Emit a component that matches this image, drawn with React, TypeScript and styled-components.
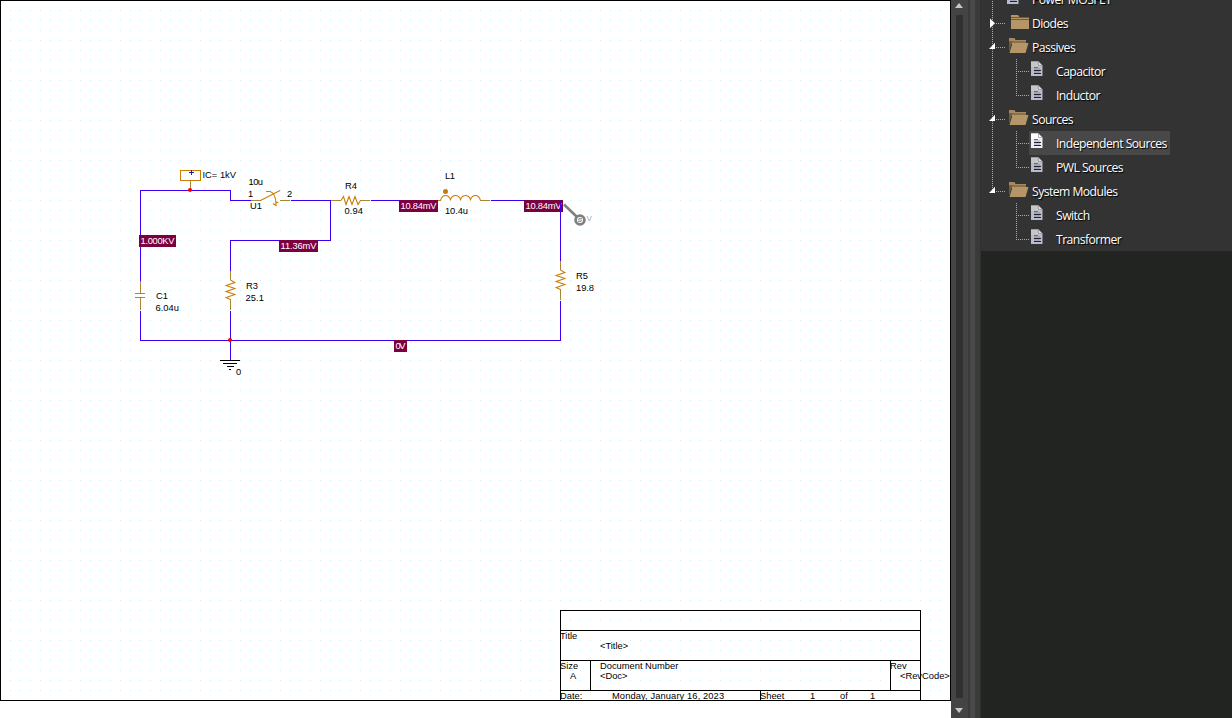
import React from 'react';
import styled, { createGlobalStyle, css } from 'styled-components';

const GlobalStyle = createGlobalStyle`
  body { margin: 0; background: #fff; overflow: hidden; }
  * { box-sizing: border-box; }
`;

const WIRE = '#3a00f5';
const PIN = '#ab8437';
const PART = '#c87d0a';
const PROBE_BG = '#7b0040';

const Window = styled.div`
  display: flex;
  width: 1232px;
  height: 718px;
  overflow: hidden;
  background: #fff;
`;

/* ---------- schematic page ---------- */

const Page = styled.main`
  display: grid;
  flex: none;
  width: 951px;
  height: 701px;
  background: #fff;
  border: 1px solid #000;
`;

const Drawing = styled.svg`
  grid-area: 1 / 1;
  display: block;
  margin: -1px;
  width: 951px;
  height: 701px;
  font-family: 'Liberation Sans', Arial, sans-serif;
  font-size: 9.33px;
`;

const TitleBlock = styled.section`
  grid-area: 1 / 1;
  place-self: end;
  position: relative;
  display: grid;
  grid-template-columns: 100%;
  grid-template-rows: 20px 30px 30px 9px;
  width: 361px;
  margin: 0 29px -1px 0;
  border: 1px solid #000;
  font: 9.33px/10px 'Liberation Sans', Arial, sans-serif;
  color: #000;
`;

const BlockRow = styled.div<{ $last?: boolean }>`
  display: flex;
  white-space: pre;
  border-bottom: ${(p) => (p.$last ? '0' : '1px solid #000')};
`;

const BlockCell = styled.div<{ $width?: number; $pad?: number }>`
  flex: ${(p) => (p.$width ? `0 0 ${p.$width}px` : '1 1 0')};
  min-width: 0;
  padding-left: ${(p) => p.$pad ?? 0}px;
  & + & { border-left: 1px solid #000; }
`;

const Line = styled.div<{ $indent?: number; $track?: number }>`
  margin-left: ${(p) => p.$indent ?? -1}px;
  letter-spacing: ${(p) => p.$track ?? 0}px;
`;

const InlineLine = styled.div`
  display: flex;
  margin-left: -1px;
`;

const Field = styled.span<{ $width: number; $track?: number }>`
  flex: 0 0 ${(p) => p.$width}px;
  letter-spacing: ${(p) => p.$track ?? 0}px;
`;

type LabelProps = { x: number; y: number; w: number; children: string; fill?: string };
const Label = ({ x, y, w, children, fill = '#000' }: LabelProps) => (
  <text x={x} y={y} textLength={w} fill={fill}>{children}</text>
);

type BadgeProps = { x: number; y: number; w: number; children: string };
const Badge = ({ x, y, w, children }: BadgeProps) => (
  <g>
    <rect x={x} y={y} width={w} height={12} fill={PROBE_BG} shapeRendering="crispEdges" />
    <Label x={x + 1.5} y={y + 9} w={w - 3} fill="#fff">{children}</Label>
  </g>
);

const Schematic = () => (
  <Drawing viewBox="0 0 951 701">
    <defs>
      <pattern id="dots" width="10" height="10" patternUnits="userSpaceOnUse">
        <rect width="1" height="1" fill="#c6ecff" />
      </pattern>
    </defs>
    <rect x="10" y="10" width="940" height="690" fill="url(#dots)" />

    <g fill="none" stroke={WIRE} shapeRendering="crispEdges">
      <path d="M140.5 281V190.5H230.5V200.5H251" />
      <path d="M140.5 311V340.5H560.5V301" />
      <path d="M291 200.5H330.5V240.5H230.5V271" />
      <path d="M230.5 311V360" />
      <path d="M371 200.5H400" />
      <path d="M491 200.5H561" />
    </g>

    <g fill="none" stroke={PIN} shapeRendering="crispEdges">
      <path d="M140.5 281V293M140.5 298V310" />
      <path d="M230.5 271V280M230.5 299V310" />
      <path d="M560.5 261V270M560.5 289V300" />
      <path d="M251 200.5H261M280 200.5H290" />
      <path d="M331 200.5H341M360 200.5H370" />
      <path d="M438 200.5H441M480 200.5H490" />
      <path d="M190.5 181V190" />
    </g>

    <g fill="none" stroke={PART} strokeWidth="1.1">
      <path d="M135 293.5H145M135 297.5H145" shapeRendering="crispEdges" />
      <rect x="180.5" y="170.5" width="20" height="10" shapeRendering="crispEdges" />
      <path d="M230.5 280L234.8 282.5L226.200 285.500L234.800 288.500L226.200 291.500L234.800 294.500L226.200 297.500L230.500 299.500" />
      <path d="M560.500 270L564.800 272.500L556.200 275.500L564.800 278.500L556.200 281.500L564.800 284.500L556.200 287.500L560.500 289.500" />
      <path d="M341 200.5L343.500 196.5L346 204.5L349 196.5L352 204.5L355 196.5L358 204.5L360.5 200.5" />
      <path d="M260.5 200.5L280 190.5" />
      <path d="M266 191.500H270Q276 193 276 205M273 203.500L276 205.500V202L278.500 202.500" />
      <path d="M440.5 200.5Q442 195.5 445.5 195.5T450.5 199.5Q452 195.5 455.5 195.5T460.5 199.5Q462 195.5 465.5 195.5T470.5 199.5Q472 195.5 475.5 195.5T480.5 200.5" />
    </g>
    <circle cx="445.5" cy="191.5" r="2.5" fill={PART} />
    <path d="M189 172.5H194M191.5 170V175" stroke="#1a1ad0" shapeRendering="crispEdges" />

    <path
      d="M220 360.5H240M223 363.5H237M227 366.5H234M229 369.5H231"
      stroke="#000"
      shapeRendering="crispEdges"
    />
    <circle cx="190" cy="190" r="2.1" fill="#f00" />
    <circle cx="230" cy="340" r="2.1" fill="#f00" />

    <Label x={202.5} y={178} w={33.5}>IC= 1kV</Label>
    <Label x={248.5} y={185} w={14.5}>10u</Label>
    <Label x={248} y={197} w={5}>1</Label>
    <Label x={287} y={197} w={5}>2</Label>
    <Label x={250} y={209} w={12}>U1</Label>
    <Label x={156} y={299} w={12}>C1</Label>
    <Label x={155.5} y={311} w={23.5}>6.04u</Label>
    <Label x={246} y={289} w={12}>R3</Label>
    <Label x={245.5} y={301} w={18.5}>25.1</Label>
    <Label x={345} y={189} w={12}>R4</Label>
    <Label x={344.5} y={214} w={18.5}>0.94</Label>
    <Label x={445} y={179} w={10}>L1</Label>
    <Label x={445} y={214} w={23}>10.4u</Label>
    <Label x={576} y={279} w={12}>R5</Label>
    <Label x={576} y={291} w={18}>19.8</Label>
    <Label x={236} y={375} w={5.5}>0</Label>

    <Badge x={139} y={235} w={37}>1.000KV</Badge>
    <Badge x={279} y={240} w={39}>11.36mV</Badge>
    <Badge x={399} y={200} w={39}>10.84mV</Badge>
    <Badge x={524} y={200} w={39}>10.84mV</Badge>
    <Badge x={394} y={340} w={13}>0V</Badge>

    <path d="M560.5 201V261" stroke={WIRE} shapeRendering="crispEdges" />

    <path d="M564 204.5L576.5 216.5" stroke="#808080" strokeWidth="2.6" />
    <circle cx="580" cy="220" r="4.4" fill="#fff" stroke="#808080" strokeWidth="2.8" />
    <path d="M582 218.5H579L578.5 220H581.5L581 221.5H578" fill="none" stroke="#999" />
    <text x="586.5" y="221" fill="#a8a8b4" fontSize="8">V</text>
  </Drawing>
);

/* ---------- scroll bar and splitter ---------- */

const ScrollBar = styled.div`
  display: flex;
  flex-direction: column;
  align-items: center;
  justify-content: space-between;
  flex: none;
  width: 17px;
  padding: 3px 1px 5px 0;
  background: #444;
`;

const Thumb = styled.div`
  flex: 1;
  width: 7px;
  margin: 7px 0 10px;
  background: #303030;
`;

const Arrow = styled.span<{ $down?: boolean }>`
  width: 0;
  height: 0;
  border: 4.5px solid transparent;
  ${(p) =>
    p.$down
      ? css`border-top: 5px solid #c8c8c8; border-bottom: 0;`
      : css`border-bottom: 5px solid #c8c8c8; border-top: 0;`}
`;

const Splitter = styled.div`
  flex: none;
  width: 13px;
  background: linear-gradient(90deg, #3a3a3a 2px, #494949 2px 7px, #3a3a3a 7px 12px, #303030 12px);
`;

/* ---------- component tree ---------- */

const Side = styled.aside`
  flex: 1;
  min-width: 0;
  background: #212421;
  overflow: hidden;
`;

const Tree = styled.ul`
  list-style: none;
  margin: -13px 0 0;
  padding: 0;
  background: #333;
  font: 12.2px/26px 'Open Sans', 'Noto Sans', sans-serif;
  color: #fff;
  text-shadow: 1px 1px 1px #000;
`;

const Row = styled.li`
  display: flex;
  height: 24px;
`;

const Guide = styled.span<{ $v?: 'full' | 'half' | 'none'; $h?: boolean; $from?: number }>`
  position: relative;
  flex: none;
  width: 24px;
  height: 24px;
  &::before {
    content: '';
    position: absolute;
    left: 11px;
    top: 0;
    width: 1px;
    height: ${(p) => (p.$v === 'full' ? 24 : p.$v === 'half' ? 13 : 0)}px;
    background: repeating-linear-gradient(180deg, #aaa 0 1px, transparent 1px 2px);
  }
  &::after {
    content: '';
    position: absolute;
    left: ${(p) => p.$from ?? 11}px;
    right: 0;
    top: 12px;
    height: ${(p) => (p.$h ? 1 : 0)}px;
    background: repeating-linear-gradient(90deg, #aaa 0 1px, transparent 1px 2px);
  }
`;

const Expander = styled.svg`
  position: absolute;
  z-index: 1;
  left: 7px;
  top: 7px;
`;

const Item = styled.span<{ $selected?: boolean }>`
  display: flex;
  padding-right: 3px;
  ${(p) => p.$selected && css`background: #484848; border-radius: 1px;`}
`;

const IconSlot = styled.span`
  flex: none;
  width: 27px;
  height: 24px;
  svg { display: block; }
`;

const Name = styled.span<{ $w: number }>`
  width: ${(p) => p.$w}px;
  white-space: nowrap;
  letter-spacing: -0.55px;
`;

const FolderIcon = ({ open }: { open?: boolean }) =>
  open ? (
    <svg width="27" height="24">
      <path d="M4 3H9.500L10.500 5H21V9H4Z" fill="#a88a60" />
      <path d="M4 6V17L7 7.500H21V6.500H10Z" fill="#6f5a3a" />
      <path d="M7.500 8H23.500L20.500 18H4.500Z" fill="#b59767" />
    </svg>
  ) : (
    <svg width="27" height="24">
      <path d="M6 4H13L14.5 6H24V18H6Z" fill="#b59767" />
      <path d="M6 6.5H24M6 8.5H24" stroke="#6f5a3a" />
    </svg>
  );

const DocIcon = ({ bright }: { bright?: boolean }) => (
  <svg width="27" height="24">
    <path d="M2 2.500H9.500L13.500 6.500V17H2Z" fill={bright ? '#eef0fb' : '#b7bbcc'} />
    <path d="M2 2.500H9.500V8H2Z" fill={bright ? '#fff' : '#c6c6c8'} />
    <path d="M9.500 2.500V6.500H13.500Z" fill={bright ? '#fff' : '#dcdcdc'} stroke="#777" strokeWidth=".5" />
    <path d="M5 8.500H9" stroke="#6b6d7a" />
    <path d="M5 11.500H12M5 14.500H12" stroke="#20222c" />
    <path d="M5 10H11M5 13H11" stroke="#7b7e90" strokeWidth=".7" />
  </svg>
);

type Node = {
  name: string;
  w: number;
  kind: 'open' | 'closed' | 'doc';
  depth: 1 | 2;
  rail: 'full' | 'half' | 'none';
  last?: boolean;
  selected?: boolean;
};

const nodes: Node[] = [
  { name: 'Power MOSFET', w: 80, kind: 'doc', depth: 1, rail: 'full' },
  { name: 'Diodes', w: 37, kind: 'closed', depth: 1, rail: 'full' },
  { name: 'Passives', w: 43, kind: 'open', depth: 1, rail: 'full' },
  { name: 'Capacitor', w: 50, kind: 'doc', depth: 2, rail: 'full' },
  { name: 'Inductor', w: 45, kind: 'doc', depth: 2, rail: 'full', last: true },
  { name: 'Sources', w: 41, kind: 'open', depth: 1, rail: 'full' },
  { name: 'Independent Sources', w: 111, kind: 'doc', depth: 2, rail: 'full', selected: true },
  { name: 'PWL Sources', w: 67, kind: 'doc', depth: 2, rail: 'full', last: true },
  { name: 'System Modules', w: 86, kind: 'open', depth: 1, rail: 'half' },
  { name: 'Switch', w: 34, kind: 'doc', depth: 2, rail: 'none' },
  { name: 'Transformer', w: 63, kind: 'doc', depth: 2, rail: 'none', last: true },
];

const TreeRow = ({ node }: { node: Node }) => (
  <Row>
    <Guide $v={node.rail} $h={node.depth === 1} $from={15}>
      {node.kind !== 'doc' && (
        <Expander width="10" height="12">
          {node.kind === 'closed' ? (
            <path d="M2 .5V10L7 5.2Z" fill="#fff" />
          ) : (
            <path d="M7 .8V7H1Z" fill="#fff" />
          )}
        </Expander>
      )}
    </Guide>
    {node.depth === 2 && <Guide $v={node.last ? 'half' : 'full'} $h />}
    <Item $selected={node.selected}>
      <IconSlot>
        {node.kind === 'doc' ? <DocIcon bright={node.selected} /> : <FolderIcon open={node.kind === 'open'} />}
      </IconSlot>
      <Name $w={node.w}>{node.name}</Name>
    </Item>
  </Row>
);

export default function App() {
  return (
    <>
      <GlobalStyle />
      <Window>
        <Page>
          <Schematic />
          <TitleBlock>
            <BlockRow />
            <BlockRow>
              <BlockCell>
                <Line>Title</Line>
                <Line $indent={39}>{'<Title>'}</Line>
              </BlockCell>
            </BlockRow>
            <BlockRow>
              <BlockCell $width={29}>
                <Line>Size</Line>
                <Line $indent={9}>A</Line>
              </BlockCell>
              <BlockCell $width={300} $pad={9}>
                <Line $indent={0}>Document Number</Line>
                <Line $indent={0}>{'<Doc>'}</Line>
              </BlockCell>
              <BlockCell>
                <Line>Rev</Line>
                <Line $indent={9}>{'<RevCode>'}</Line>
              </BlockCell>
            </BlockRow>
            <BlockRow $last>
              <BlockCell $width={199}>
                <InlineLine>
                  <Field $width={52}>Date:</Field>
                  <Field $width={120} $track={0.1}>Monday, January 16, 2023</Field>
                </InlineLine>
              </BlockCell>
              <BlockCell>
                <InlineLine>
                  <Field $width={50}>Sheet</Field>
                  <Field $width={30}>1</Field>
                  <Field $width={30}>of</Field>
                  <Field $width={10}>1</Field>
                </InlineLine>
              </BlockCell>
            </BlockRow>
          </TitleBlock>
        </Page>
        <ScrollBar>
          <Arrow />
          <Thumb />
          <Arrow $down />
        </ScrollBar>
        <Splitter />
        <Side>
          <Tree>
            {nodes.map((n) => (
              <TreeRow key={n.name} node={n} />
            ))}
          </Tree>
        </Side>
      </Window>
    </>
  );
}
